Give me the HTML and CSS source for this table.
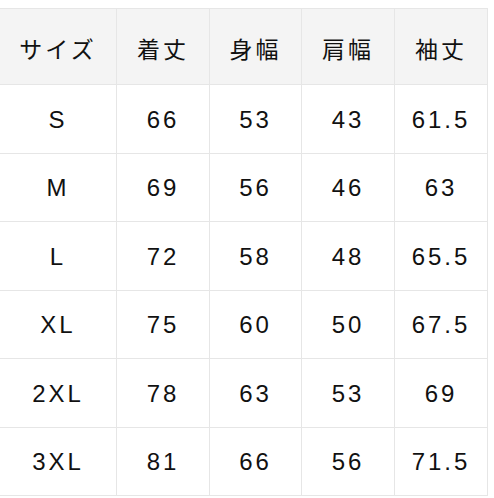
FILE: index.html
```html
<!DOCTYPE html>
<html lang="ja">
<head>
<meta charset="utf-8">
<title>サイズ表</title>
<link rel="stylesheet" href="styles.css">
</head>
<body>
<div class="size-table" role="table">
  <div class="cell head">サイズ</div>
  <div class="cell head">着丈</div>
  <div class="cell head">身幅</div>
  <div class="cell head">肩幅</div>
  <div class="cell head">袖丈</div>

  <div class="cell">S</div><div class="cell">66</div><div class="cell">53</div><div class="cell">43</div><div class="cell">61.5</div>
  <div class="cell">M</div><div class="cell">69</div><div class="cell">56</div><div class="cell">46</div><div class="cell">63</div>
  <div class="cell">L</div><div class="cell">72</div><div class="cell">58</div><div class="cell">48</div><div class="cell">65.5</div>
  <div class="cell">XL</div><div class="cell">75</div><div class="cell">60</div><div class="cell">50</div><div class="cell">67.5</div>
  <div class="cell">2XL</div><div class="cell">78</div><div class="cell">63</div><div class="cell">53</div><div class="cell">69</div>
  <div class="cell">3XL</div><div class="cell">81</div><div class="cell">66</div><div class="cell">56</div><div class="cell">71.5</div>
</div>
</body>
</html>
```
FILE: styles.css
```css
html, body {
  margin: 0;
  background: #ffffff;
}
body {
  padding-top: 8px;
  font-family: "Liberation Sans", "Noto Sans CJK JP", sans-serif;
  color: #111111;
}
.size-table {
  display: grid;
  grid-template-columns: 116px 92px 91px 92px 92px;
  grid-template-rows: 75px repeat(6, 67.5px);
  gap: 1px;
  width: max-content;
  background: #e6e6e6;
  border-top: 1px solid #e6e6e6;
  border-right: 1px solid #e6e6e6;
  border-bottom: 1px solid #e6e6e6;
}
.cell {
  display: flex;
  align-items: center;
  justify-content: center;
  background: #ffffff;
  font-size: 24px;
  letter-spacing: 3px;
  line-height: 1;
  padding-top: 2px;
}
.head {
  background: #f4f4f4;
  font-family: "Noto Sans CJK JP", sans-serif;
  font-size: 23px;
  letter-spacing: 3px;
  padding-top: 3px;
}
```
